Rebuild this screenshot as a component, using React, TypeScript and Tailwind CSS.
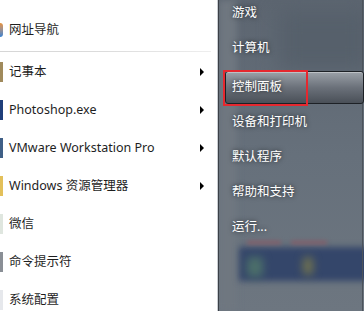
import React from 'react';

const FONT = "font-['Segoe_UI','Noto_Sans','Noto_Sans_CJK_SC',sans-serif]";

type Item = { label: string; icon: string; arrow?: boolean };

const programs: Item[] = [
  { label: '记事本', icon: 'bg-[#a08a5c]', arrow: true },
  { label: 'Photoshop.exe', icon: 'bg-[#1f3f7a]', arrow: true },
  { label: 'VMware Workstation Pro', icon: 'bg-[#3f5f86]', arrow: true },
  { label: 'Windows 资源管理器', icon: 'bg-[#e3c05a]', arrow: true },
  { label: '微信', icon: 'bg-[#dfe6df]' },
  { label: '命令提示符', icon: 'bg-[#8a8f96]' },
  { label: '系统配置', icon: 'bg-[#e6e8ec]' },
];

function ProgramRow({ item }: { item: Item }) {
  return (
    <div className="flex h-[38px] items-center">
      <div className={`h-5 w-[3px] ${item.icon}`} />
      <span className="ml-[6px] flex-1 text-[12.5px] text-[#1e1e1e]">{item.label}</span>
      {item.arrow && (
        <div className="mr-[13px] h-0 w-0 border-y-[4px] border-l-[4px] border-y-transparent border-l-black" />
      )}
    </div>
  );
}

function PlaceRow({ label, selected }: { label: string; selected?: boolean }) {
  if (selected) {
    return (
      <div className="relative h-[35px] pl-[6px] pr-0 pt-[1px]">
        <div className="flex h-[33px] items-center rounded-[3px] border border-[#1d2126] bg-gradient-to-b from-[#9ba1a8] via-[#6b717a] to-[#4a5058] pl-[6px] shadow-[inset_0_1px_0_rgba(255,255,255,0.35)]">
          <span className="text-[12.5px] text-white [text-shadow:0_0_4px_rgba(0,0,0,0.7)]">{label}</span>
        </div>
        <div className="absolute left-[4px] top-0 h-[36px] w-[85px] border-[2.5px] border-[#e5282f]" />
      </div>
    );
  }
  return (
    <div className="flex h-[35px] items-center pl-[13px]">
      <span className="text-[12.5px] text-white [text-shadow:0_0_5px_rgba(0,0,0,0.7)]">{label}</span>
    </div>
  );
}

export default function App() {
  return (
    <div className={`flex h-[311px] w-[364px] overflow-hidden ${FONT}`}>
      {/* left column */}
      <div className="w-[217px] shrink-0 bg-white pt-[11px]">
        <div className="flex h-[38px] items-center">
          <div className="h-[14px] w-[3px] rounded-r bg-gradient-to-b from-[#e8902e] to-[#2f7fd0]" />
          <span className="ml-[6px] text-[12.5px] text-[#1e1e1e]">网址导航</span>
        </div>
        <div className="flex h-[4px] items-center">
          <div className="h-px w-[211px] bg-gradient-to-r from-[#d6d6d6] via-[#dcdcdc] to-[#eeeeee]" />
        </div>
        {programs.map((p) => (
          <ProgramRow key={p.label} item={p} />
        ))}
      </div>

      <div className="w-px shrink-0 bg-[#c9cdd2]" />
      <div className="w-px shrink-0 bg-[#3b4047]" />

      {/* right column */}
      <div className="relative flex-1 overflow-hidden bg-gradient-to-b from-[#5c6570] via-[#66707b] to-[#6d7680]">
        <div className="absolute left-0 top-0 h-full w-[18px] bg-[#6f7780] blur-[3px]" />
        <div className="absolute left-[60px] top-[10px] h-[60px] w-[90px] bg-[#56606b] blur-[10px]" />
        <div className="absolute left-[20px] top-[247px] h-[34px] w-[140px] bg-[#34466a] blur-[3px]" />
        <div className="absolute left-[28px] top-[241px] h-[3px] w-[34px] bg-[#8a5a66] blur-[2px]" />
        <div className="absolute left-[72px] top-[241px] h-[3px] w-[36px] bg-[#8a5a66] blur-[2px]" />
        <div className="absolute left-[28px] top-[257px] h-[20px] w-[16px] rounded bg-[#4c6f6a] blur-[4px]" />
        <div className="absolute left-[84px] top-[257px] h-[18px] w-[10px] rounded bg-[#70724f] blur-[4px]" />
        <div className="absolute right-[1px] top-0 h-full w-px bg-[#4c535b]" />

        <div className="relative -mt-[4px] flex flex-col">
          <PlaceRow label="游戏" />
          <PlaceRow label="计算机" />
          <div className="h-[4px]" />
          <PlaceRow label="控制面板" selected />
          <PlaceRow label="设备和打印机" />
          <PlaceRow label="默认程序" />
          <PlaceRow label="帮助和支持" />
          <PlaceRow label="运行..." />
        </div>
      </div>
    </div>
  );
}
